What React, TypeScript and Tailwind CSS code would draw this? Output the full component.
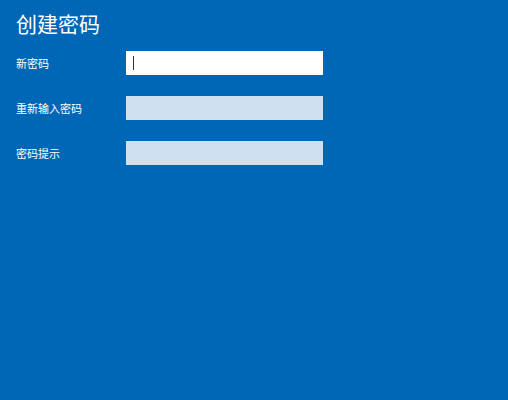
import React from 'react';

const fields = [
  { label: '新密码', active: true },
  { label: '重新输入密码', active: false },
  { label: '密码提示', active: false },
];

export default function App() {
  return (
    <div
      className="w-[508px] h-[400px] bg-[#0067b6] text-white px-4 pt-[9px]"
      style={{ fontFamily: '"Noto Sans CJK SC", "Noto Sans", sans-serif' }}
    >
      <h1 className="text-[21px] leading-[28px] font-normal">创建密码</h1>
      <div className="mt-[14px] flex flex-col gap-[21px]">
        {fields.map(f => (
          <div key={f.label} className="flex items-center">
            <label className="w-[110px] text-[11px] leading-none">{f.label}</label>
            <div
              className={
                'w-[197px] h-[24px] flex items-center pl-[7px] ' +
                (f.active ? 'bg-white' : 'bg-[#cfe0f1]')
              }
            >
              {f.active && <span className="w-px h-[14px] bg-[#333]" />}
            </div>
          </div>
        ))}
      </div>
    </div>
  );
}
